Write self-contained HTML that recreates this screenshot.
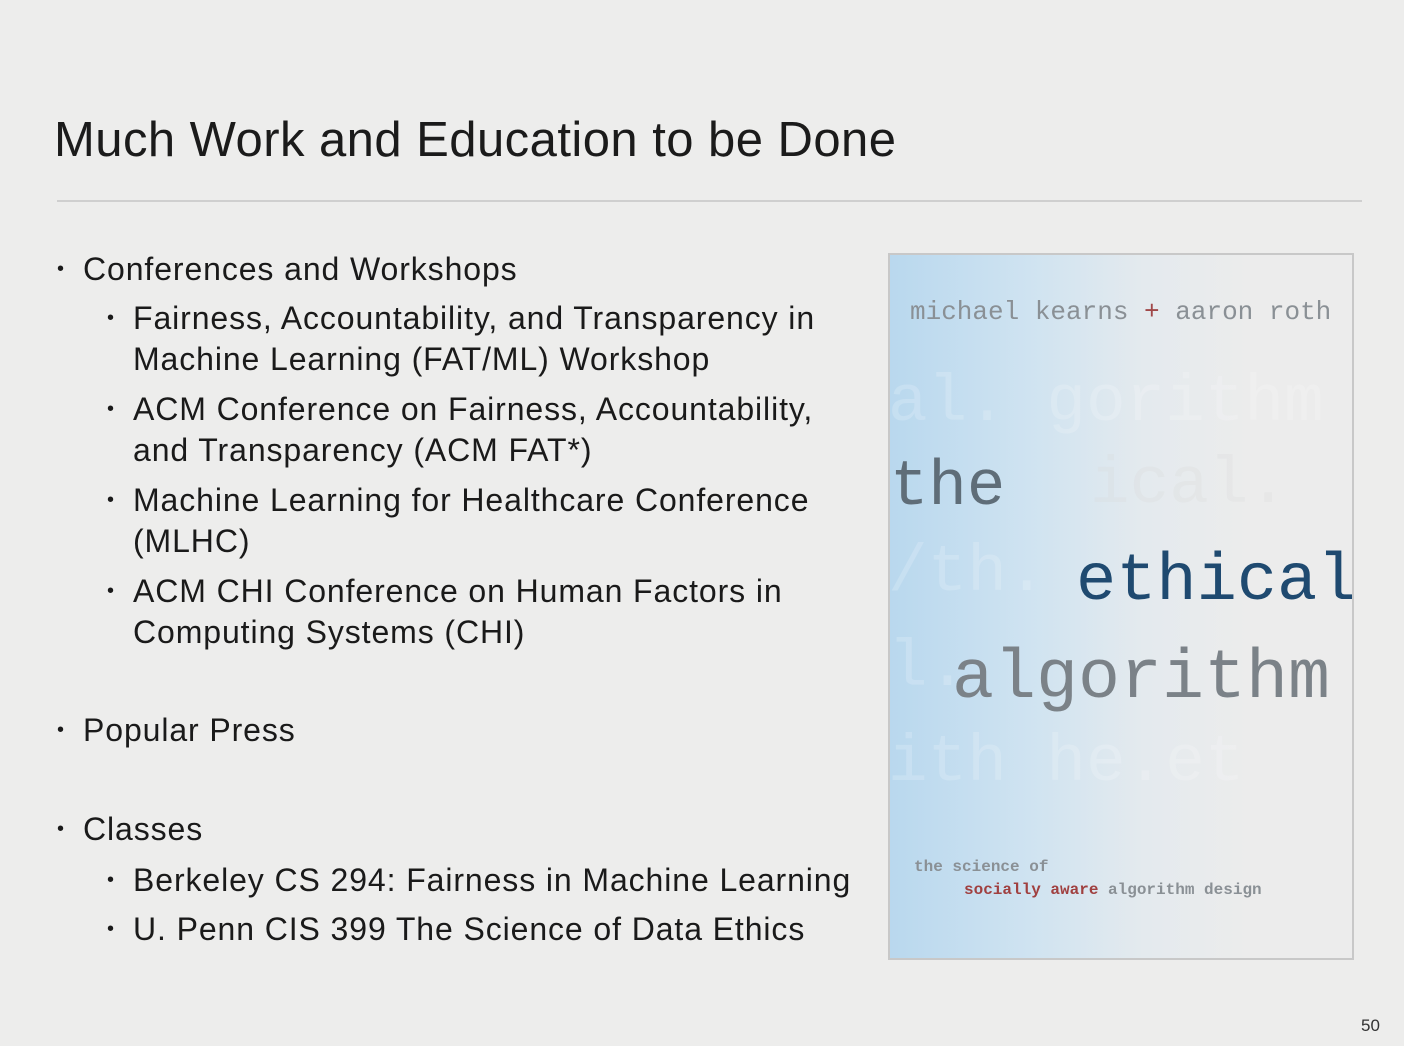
<!DOCTYPE html>
<html><head><meta charset="utf-8"><style>
body{margin:0;width:1404px;height:1046px;background:#ededec;font-family:"Liberation Sans",sans-serif;color:#1a1a1a;position:relative;overflow:hidden}
.t{position:absolute;white-space:nowrap}
h1{position:absolute;left:54px;top:112px;margin:0;font-weight:normal;font-size:49px;letter-spacing:0.45px;color:#1b1b1b}
.hr{position:absolute;left:57px;top:200px;width:1305px;height:2px;background:#cfcfcf}
.l1,.l2{position:absolute;font-size:32px;letter-spacing:0.9px;line-height:41px;white-space:nowrap}
.l1::before,.l2::before{content:"•";position:absolute;left:-26px;font-size:20px}
.l1{left:83px}.l2{left:133px}
.book{position:absolute;left:888px;top:253px;width:462px;height:703px;border:2px solid #c8c8c8;background:linear-gradient(90deg,#b9d8ee 0%,#cfe3f1 30%,#e4eaee 55%,#ececec 78%);overflow:hidden}
.m{position:absolute;font-family:"Liberation Mono",monospace;white-space:nowrap}
</style></head><body>
<h1>Much Work and Education to be Done</h1>
<div class="hr"></div>
<div class="l1" style="top:249px">Conferences and Workshops</div>
<div class="l2" style="top:298px">Fairness, Accountability, and Transparency in<br>Machine Learning (FAT/ML) Workshop</div>
<div class="l2" style="top:389px">ACM Conference on Fairness, Accountability,<br>and Transparency (ACM FAT*)</div>
<div class="l2" style="top:480px">Machine Learning for Healthcare Conference<br>(MLHC)</div>
<div class="l2" style="top:571px">ACM CHI Conference on Human Factors in<br>Computing Systems (CHI)</div>
<div class="l1" style="top:710px">Popular Press</div>
<div class="l1" style="top:809px">Classes</div>
<div class="l2" style="top:860px">Berkeley CS 294: Fairness in Machine Learning</div>
<div class="l2" style="top:909px">U. Penn CIS 399 The Science of Data Ethics</div>
<div class="book">
<div class="m" style="left:20px;top:42px;font-size:26px;color:#8a9095">michael kearns <span style="color:#a04848">+</span> aaron roth</div>
<div class="m" style="left:-2px;top:110px;font-size:66px;color:rgba(255,255,255,.18)">al.  gorithm</div>
<div class="m" style="left:200px;top:192px;font-size:66px;color:rgba(215,215,215,.25)">  ical.</div>
<div class="m" style="left:-2px;top:280px;font-size:66px;color:rgba(255,255,255,.18)">/th.</div>
<div class="m" style="left:-2px;top:375px;font-size:66px;color:rgba(255,255,255,.18)">l.</div>
<div class="m" style="left:-2px;top:470px;font-size:66px;color:rgba(255,255,255,.18)">ith    he.et</div>
<div class="m" style="left:0px;top:197px;font-size:64px;color:#5f6d78">the</div>
<div class="m" style="left:186px;top:289px;font-size:67px;color:#1f4a70">ethical</div>
<div class="m" style="left:62px;top:385px;font-size:70px;color:#7b8288">algorithm</div>
<div class="m" style="left:24px;top:603px;font-size:16px;color:#8a9095;font-weight:bold">the science of</div>
<div class="m" style="left:74px;top:626px;font-size:16px;color:#8a9095;font-weight:bold"><span style="color:#a04040">socially aware</span> algorithm design</div>
</div>
<div class="t" style="left:1361px;top:1016px;font-size:17px;color:#333">50</div>
</body></html>
